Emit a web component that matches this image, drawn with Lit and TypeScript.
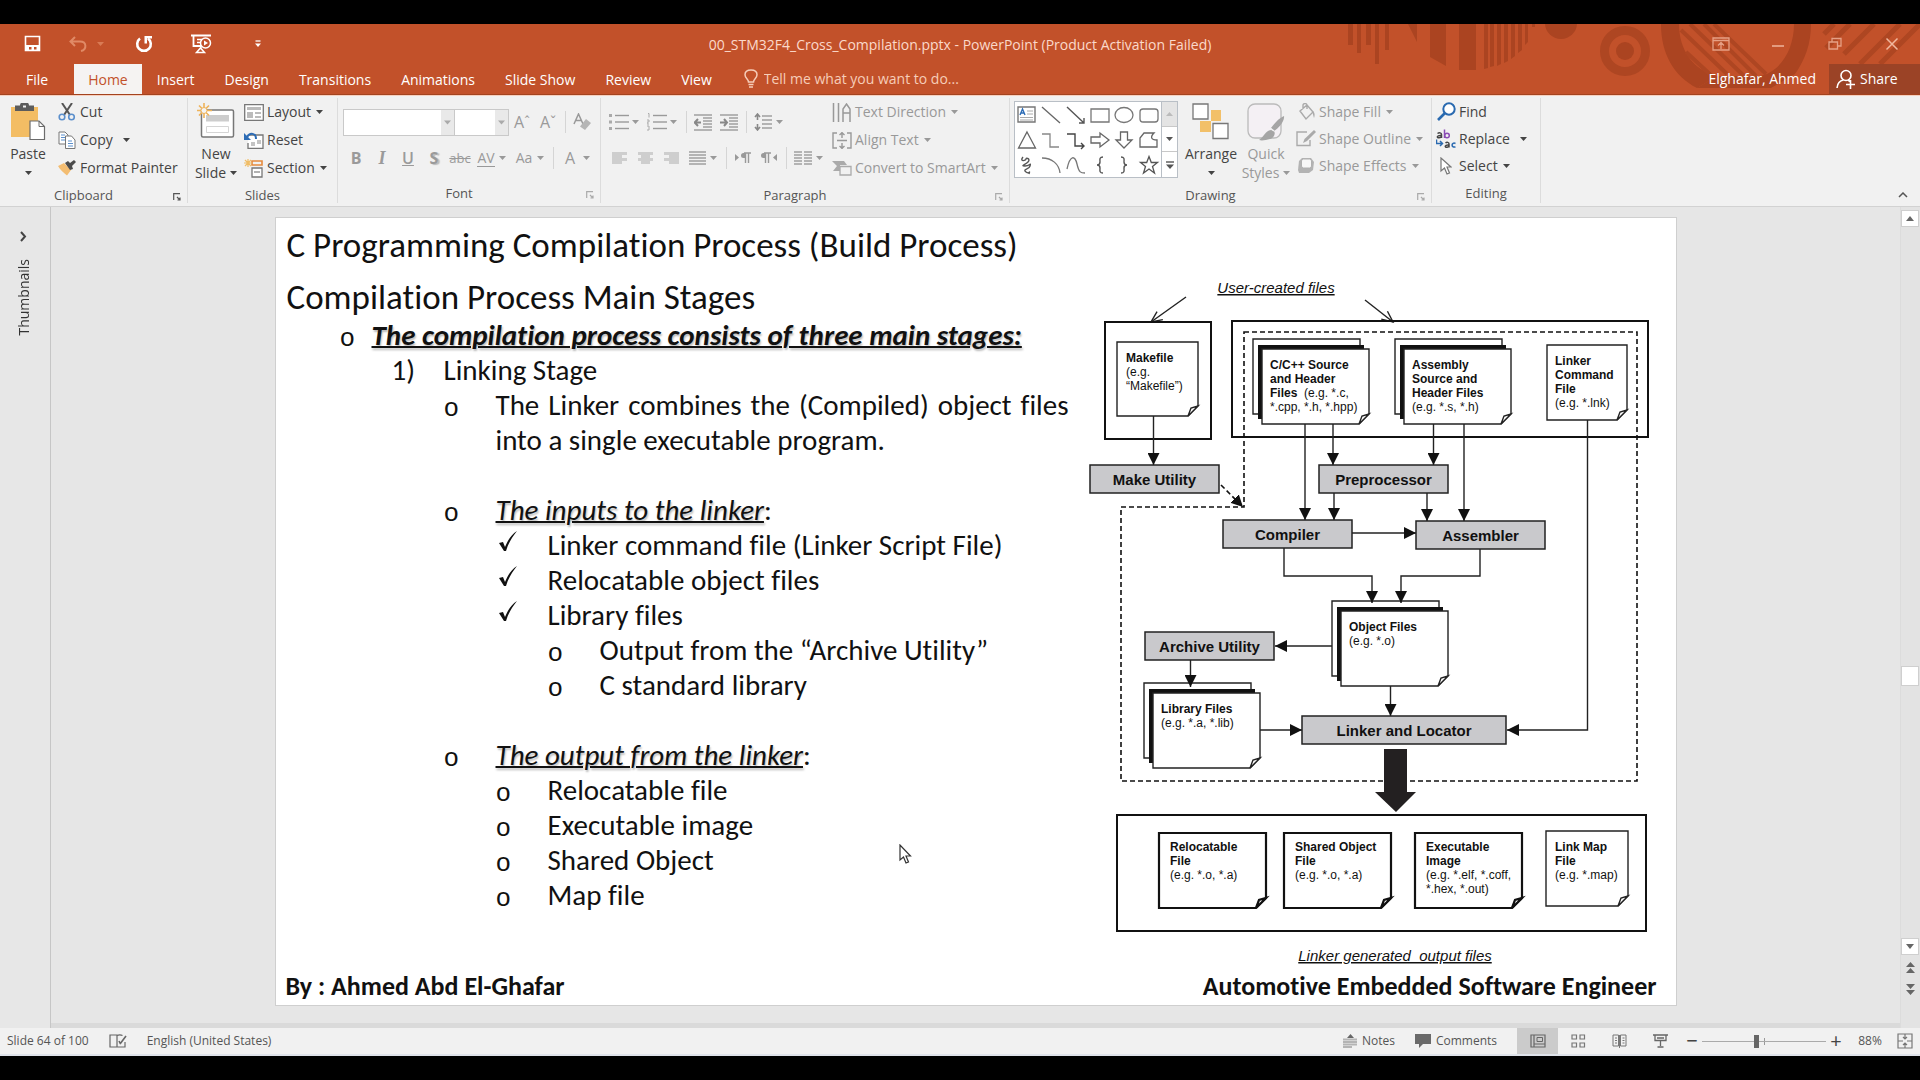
import { LitElement, html, svg, css, nothing } from "lit";
import { customElement } from "lit/decorators.js";

const icon = (w: number, h: number, body: unknown) =>
  html`<svg class="icon" width=${w} height=${h} viewBox="0 0 ${w} ${h}" fill="none" aria-hidden="true">${body}</svg>`;

const caret = html`<svg class="caret" width="7" height="4" viewBox="0 0 7 4" aria-hidden="true"><path d="M0 0H7L3.5 4Z" fill="currentColor" /></svg>`;

const lines = (x: number, w: number[], y: number, step: number) =>
  w.map((len, i) => svg`<path d="M${x} ${y + i * step}h${len}" stroke="currentColor" stroke-width="1.4" />`);

const icons = {
  save: icon(18, 18, svg`<path d="M1.500 1.500h14v14h-14z" stroke="#fff" stroke-width="1.600"/><path d="M1 10h15v6H1z" fill="#fff"/><path d="M5 12h2.500v2.500H5zM10 12h2.500v2.500H10z" fill="#c2512a"/>`),
  undo: icon(18, 16, svg`<path d="M6 1L1.500 5.500L6 10M2 5.500h9c7 0 7 8 1 9.500" stroke="#e08a66" stroke-width="2"/>`),
  redo: icon(18, 18, svg`<path d="M5 3.500a6.800 6.800 0 1 0 8 0" stroke="#fff" stroke-width="2.600"/><path d="M9.500 1h7.500v2.500h-5v5H9.500z" fill="#fff"/>`),
  show: icon(22, 20, svg`<path d="M1 1.500h20M3.500 2v10H11" stroke="#fff" stroke-width="1.800"/><path d="M7 5.500h5M7 8.500h3M11 12v3M6.500 18.500h8L10.500 14z" stroke="#fff" stroke-width="1.500"/><circle cx="15.500" cy="9" r="5" stroke="#fff" stroke-width="1.500"/><path d="M14 6.500v5l4-2.500z" fill="#fff"/>`),
  qat: icon(6, 8, svg`<path d="M0.500 1h5" stroke="#fff" stroke-width="1.300"/><path d="M0 3.500h6L3 7z" fill="#fff"/>`),
  ribbonOpts: icon(18, 14, svg`<path d="M1 1h16v12H1zM1 3.500h16M9 12V6M6 8.500L9 5.500l3 3" stroke="#e6a085" stroke-width="1.300"/>`),
  min: icon(14, 12, svg`<path d="M1 8h12" stroke="#eeb49c" stroke-width="1.500"/>`),
  restore: icon(14, 14, svg`<path d="M1 5h8.500v7H1zM4 5V1.500h9V9H10" stroke="#e6a085" stroke-width="1.300"/>`),
  close: icon(14, 14, svg`<path d="M1.500 1.500l11 11M12.500 1.500l-11 11" stroke="#f0b89f" stroke-width="1.500"/>`),
  bulb: icon(14, 20, svg`<path d="M4.500 13c0-3-3.500-3.500-3.500-7.200C1 2.800 3.500 1 7 1s6 1.800 6 4.800c0 3.700-3.500 4.200-3.500 7.200z" stroke="#f6cdb9" stroke-width="1.500"/><path d="M4.500 15.500h5M5 18h4" stroke="#f6cdb9" stroke-width="1.500"/>`),
  person: icon(20, 20, svg`<circle cx="10" cy="6.500" r="5" stroke="#fff" stroke-width="1.600"/><path d="M1 19c.5-5 3-7.500 6.500-8M12 11l2 1.500M10 15.500h9M14.500 11v9" stroke="#fff" stroke-width="1.600"/>`),
  paste: icon(36, 38, svg`<path d="M1 4h27v30H1z" fill="#f3bd64"/><path d="M5 2.500h5a4.500 3.500 0 0 1 9 0H24V8H5z" fill="#5c5c5c"/><path d="M13 2.500h3v2h-3z" fill="#f1f1f1"/><path d="M20 18h9l5.500 5.500V36.500H20z" fill="#fff" stroke="#6c6c6c" stroke-width="1.200"/><path d="M29 18v5.500h5.500" stroke="#6c6c6c"/>`),
  cut: icon(18, 18, svg`<path d="M4 0L12 12M14 0L6 12" stroke="#555" stroke-width="2"/><circle cx="4" cy="14" r="2.800" stroke="#5b8fcc" stroke-width="1.600"/><circle cx="13.500" cy="14" r="2.800" stroke="#5b8fcc" stroke-width="1.600"/>`),
  copy: icon(18, 18, svg`<path d="M1 1h6l3 3v9H1z" fill="#fff" stroke="#777"/><path d="M3 4h4M3 6.500h4M3 9h4" stroke="#5b8fcc"/><path d="M7.500 5h6l3.500 4v8.500H7.500z" fill="#fff" stroke="#777"/><path d="M10 10h4M10 12.500h5M10 15h5" stroke="#5b8fcc"/>`),
  painter: icon(18, 16, svg`<path d="M0 6l6-3 7 7-4 5.500C6 13 2 10 0 6z" fill="#f3bd72"/><path d="M7 3l3-2 2 2 4-3 2 2-4 4 1 3-3 1z" fill="#4c4c4c"/>`),
  newSlide: icon(38, 38, svg`<path d="M5 7h30a1.500 1.500 0 0 1 1.500 1.500v24A1.500 1.500 0 0 1 35 34H6a1.500 1.500 0 0 1-1.500-1.500V7z" fill="#fff" stroke="#777" stroke-width="1.500"/><path d="M9 12h23v6.500H9z" fill="#cdcdcd"/><path d="M9.500 23.500h22v6h-22z" stroke="#d5d5d5"/><path d="M7 0v15M0 7.500h15M2 2.500l10 10M12 2.500l-10 10" stroke="#eeb35a" stroke-width="1.600"/><circle cx="7" cy="7.500" r="3" fill="#f4f4f4" stroke="#eeb35a"/>`),
  layout: icon(20, 17, svg`<path d="M.7.7h18.600v15.600H.7z" fill="#fff" stroke="#777" stroke-width="1.300"/><path d="M3 3h14v3H3zM3 8h6v6H3zM11 8h6v2h-6zM11 12h6v2h-6z" fill="#bbb"/>`),
  reset: icon(20, 17, svg`<path d="M5 3h14v13.300H4V11" fill="#fff" stroke="#777" stroke-width="1.300"/><path d="M13 8h4v4h-4zM7 10h4v4H7z" fill="#c4c4c4"/><path d="M3 5c3-5 9-4 9 2" stroke="#2d6cb5" stroke-width="2"/><path d="M0 1v7h7z" fill="#2d6cb5"/>`),
  section: icon(20, 19, svg`<path d="M8 2h10v4H8z" stroke="#e58a3c" stroke-width="1.600"/><path d="M8 9h10v9H8z" fill="#fff" stroke="#777" stroke-width="1.300"/><path d="M10 13h6" stroke="#999" stroke-width="1.500"/><path d="M4 0v8M0 4h8M1 1l6 6M7 1L1 7" stroke="#f0bd66" stroke-width="1.200"/>`),
  clear: icon(18, 18, svg`<path d="M1 11L5.500 1L10 11M2.500 7.500h6" stroke="#999" stroke-width="1.500"/><path d="M13 6l5 4-6 7-5-3.500z" fill="#b5b5b5"/>`),
  bullets: icon(20, 18, [svg`<path d="M0 1h3v3H0zM0 7.500h3v3H0zM0 14h3v3H0z" fill="#aaa"/>`, lines(6, [14, 14, 14], 2.5, 6.5)]),
  numbers: icon(20, 18, [svg`<path d="M1 0.500h1v4M0 7h2v2H0v2h2M0 13h2v4H0" stroke="#aaa"/>`, lines(6, [14, 14, 14], 2.5, 6.5)]),
  outdent: icon(18, 17, [lines(0, [18], 1, 1), lines(9, [9, 9, 9, 9], 4, 3), lines(0, [18], 16, 1), svg`<path d="M0 8.500h7M4 5L.7 8.500L4 12" stroke="#888" stroke-width="2"/>`]),
  indent: icon(18, 17, [lines(0, [18], 1, 1), lines(9, [9, 9, 9, 9], 4, 3), lines(0, [18], 16, 1), svg`<path d="M0 8.500h7M4 5L7 8.500L4 12" stroke="#888" stroke-width="2"/>`]),
  spacing: icon(18, 18, [lines(8, [10, 10, 10, 10], 3, 4), svg`<path d="M3.500 1v6M3.500 11v6M1 4L3.500 1L6 4M1 14l2.500 3L6 14" stroke="#888" stroke-width="1.600"/>`]),
  left: icon(15, 12, svg`<path d="M0 0h15v3H0zM0 3h10v3H0zM0 6h15v3H0zM0 9h10v3H0z" fill="#cecece"/>`),
  center: icon(15, 12, svg`<path d="M0 0h15v3H0zM3 3h9v3H3zM0 6h15v3H0zM3 9h9v3H3z" fill="#cecece"/>`),
  right: icon(15, 12, svg`<path d="M0 0h15v3H0zM5 3h10v3H5zM0 6h15v3H0zM5 9h10v3H5z" fill="#cecece"/>`),
  justify: icon(17, 14, lines(0, [17, 17, 17, 17, 17], 1, 3)),
  ltr: icon(17, 12, svg`<path d="M0 2v7l4-3.500z" fill="#999"/><path d="M10 1h-1.500a2.500 2.500 0 0 0 0 5H10z" fill="#999"/><path d="M9 1h7M10.500 1v10M13.500 1v10" stroke="#999" stroke-width="1.400"/>`),
  rtl: icon(17, 12, svg`<path d="M16 2v7l-4-3.500z" fill="#999"/><path d="M4 1H2.500a2.500 2.500 0 0 0 0 5H4z" fill="#999"/><path d="M3 1h7M4.500 1v10M7.500 1v10" stroke="#999" stroke-width="1.400"/>`),
  columns: icon(18, 14, [lines(0, [8, 8, 8, 8, 8], 1, 3), lines(10, [8, 8, 8, 8, 8], 1, 3)]),
  textDir: icon(20, 19, svg`<path d="M1.500 0v19M6.500 0v19M11 19V6l3.500-5L18 6v13M11 10h7" stroke="#999" stroke-width="1.500"/>`),
  alignText: icon(20, 17, svg`<path d="M5 1H1v15h4M15 1h4v15h-4M5 8.500h10M10 0v6M10 11v6M7.500 3L10 .7 12.500 3M7.500 14l2.500 2.300 2.500-2.300" stroke="#999" stroke-width="1.400"/>`),
  smartArt: icon(20, 16, svg`<path d="M0 1h12l3 4H8v6H1l4-5z" fill="#aaa"/><path d="M8 6.500h11V15H8z" fill="#f1f1f1" stroke="#aaa" stroke-width="1.300"/>`),
  arrange: icon(38, 38, svg`<path d="M19 7h10v11H19zM8 18h11v11H8z" fill="#f2c069"/><path d="M1 1h15v15H1zM21 20.500h15v15H21z" fill="#fff" stroke="#777" stroke-width="1.300"/>`),
  quick: icon(38, 38, svg`<rect x="1" y="1" width="33" height="34" rx="7" fill="#f4f0f4" stroke="#bbb" stroke-width="1.300"/><path d="M37 13c1 5-6 13-10 15l-3-3c3-4 8-10 13-12zM24 27c6 0 4 8-1 9-4 1-8 2-11 1 5-3 6-9 12-10z" fill="#a5a5a5"/><path d="M23 25l4 3" stroke="#f1f1f1" stroke-width="1.500"/>`),
  fill: icon(18, 18, svg`<path d="M3 8l7-6 6 7-7 7zM6 6V2.500a2 2 0 0 1 4 0V6" stroke="#aaa" stroke-width="1.400"/><path d="M15 8c3 1 3 4 2 7z" fill="#aaa"/>`),
  outline: icon(20, 17, svg`<path d="M11 2H1v13.500h13V10" stroke="#aaa" stroke-width="1.400"/><path d="M18 0l2 2-9 9-4 2 1.500-4z" fill="#aaa"/>`),
  effects: icon(18, 17, svg`<path d="M5 1h9l3 4-1 8-4 3H2l-1-3 1-9z" fill="#b3b3b3"/><rect x="4.500" y="2" width="10" height="9" rx="2" fill="#f7f7f7" stroke="#b0b0b0"/>`),
  find: icon(19, 19, svg`<circle cx="12" cy="7" r="5.700" fill="#fff" stroke="#2a6ab0" stroke-width="2"/><path d="M8 11l-7 7" stroke="#2a6ab0" stroke-width="2.600"/>`),
  replace: icon(20, 20, svg`
    <g stroke-width="1.500">
      <path d="M1.500 4.500c1.500-1 4-1 4 1V9M5.500 6.500c-5-.5-5 2.500-2.500 2.300 1.500 0 2.500-1 2.500-2" stroke="#444"/>
      <path d="M8.500 0.500V9" stroke="#8a4cb4"/><circle cx="11" cy="6.500" r="2.300" stroke="#8a4cb4"/>
      <path d="M9.500 14c1.200-1 3.500-1 3.500 1v3.500M13 16c-4.500-.5-4.500 2.500-2.200 2.300 1.200 0 2.200-1 2.200-2" stroke="#444"/>
      <path d="M19.500 14.500c-4-2-5 4.500 0 3.500M0.500 10.500v4H6M4 12l2.500 2.500L4 17" stroke="#2a6ab0"/>
    </g>`),
  select: icon(12, 18, svg`<path d="M1 1v13l3.500-3 2.500 6 2.500-1-2.500-6h4z" fill="#fff" stroke="#777" stroke-width="1.200"/>`),
  launcher: icon(8, 8, svg`<path d="M.7 7V.7H7M4 4l3 3M7 4.500V7H4.500" stroke="currentColor" stroke-width="1.200"/>`),
  proof: icon(18, 15, svg`<path d="M1 1h7v12H1zM8 1.500c2-1 4-.8 5.500 0M8 13h8V8" stroke="#666" stroke-width="1.200"/><path d="M17 2l-6 8M10 7l1.500 3" stroke="#666" stroke-width="1.600"/>`),
  notes: icon(14, 14, svg`<path d="M4 4l3.500-4L11 4z" fill="#666"/><path d="M0 5.500h14M0 8h14M0 10.500h14M0 13h9" stroke="#b4b4b4" stroke-width="1.800"/>`),
  comments: icon(16, 14, svg`<path d="M0 0h16v10H8l-4 4v-4H0z" fill="#6a6a6a"/>`),
  normal: icon(16, 14, svg`<path d="M1 1h14v12H1zM4 1v12M4 10h11" stroke="#666" stroke-width="1.200"/><path d="M7 3.500h5.500v4H7z" stroke="#666"/>`),
  sorter: icon(15, 14, svg`<path d="M1 1h4.500v4H1zM9 1h4.500v4H9zM1 9h4.500v4H1zM9 9h4.500v4H9z" stroke="#777" stroke-width="1.200"/>`),
  reading: icon(15, 14, svg`<path d="M1 1h5.500v11H1zM8.500 1H14v11H8.500zM7.500 1v13M3 4h2M3 6.500h2M3 9h2M10.500 4h2M10.500 6.500h2M10.500 9h2" stroke="#777"/>`),
  present: icon(15, 14, svg`<path d="M0 1h15M2 1.500v5h11v-5M7.500 7v5M4.500 13h6M4 4h7" stroke="#666" stroke-width="1.300"/>`),
  fit: icon(16, 16, svg`<path d="M1 1h14v14H1zM8 1v5M8 10v5M1 8h5M10 8h5M6 4l2 2 2-2M6 12l2-2 2 2" stroke="#777" stroke-width="1.200"/>`),
  collapse: icon(10, 6, svg`<path d="M1 5l4-4 4 4" stroke="#555" stroke-width="1.500"/>`),
  expand: icon(7, 11, svg`<path d="M1 1l4 4.500L1 10" stroke="#444" stroke-width="2"/>`),
};

const shapes = [
  ["Text box", svg`<path d="M3 4h17v15H3z" stroke="#777" stroke-width="1.400" fill="#fff"/><path d="M5 12l2.500-6L10 12M6 10h3" stroke="#2d6cb5" stroke-width="1.400"/><path d="M12 8h6M12 11h6M5 14.500h13M5 17h13" stroke="#aaa"/>`],
  ["Line", svg`<path d="M3 4l18 16" stroke="#666" stroke-width="1.300"/>`],
  ["Line arrow", svg`<path d="M3 4l17 16M20 15v5h-5" stroke="#555" stroke-width="1.400"/>`],
  ["Rectangle", svg`<path d="M3 6h18v13H3z" stroke="#777" stroke-width="1.300"/>`],
  ["Oval", svg`<ellipse cx="12" cy="12" rx="9" ry="7.500" stroke="#777" stroke-width="1.300"/>`],
  ["Rounded rectangle", svg`<rect x="3" y="6" width="18" height="13" rx="3" stroke="#777" stroke-width="1.300"/>`],
  ["Triangle", svg`<path d="M12 4l8.500 16h-17z" stroke="#666" stroke-width="1.300"/>`],
  ["Elbow connector", svg`<path d="M3 6h8v13h9" stroke="#888" stroke-width="1.300"/>`],
  ["Elbow arrow", svg`<path d="M3 6h8v12h9M17 15l3 3-3 3" stroke="#444" stroke-width="1.400"/>`],
  ["Right arrow", svg`<path d="M3 9h9V5l9 7-9 7v-4H3z" stroke="#666" stroke-width="1.300"/>`],
  ["Down arrow", svg`<path d="M8.500 4h7v8h4.500l-8 8-8-8h4.500z" stroke="#666" stroke-width="1.300"/>`],
  ["Freeform", svg`<path d="M7 5h10c-4 4-3 7 3 7v7H3v-9z" stroke="#666" stroke-width="1.300"/>`],
  ["Scribble", svg`<path d="M8 4c-4 5 3 4 3 2s5 0 2 3-8 4-3 4 6-4 5 0-8 3-4 6 4-3 3 2" stroke="#555" stroke-width="1.400"/>`],
  ["Arc", svg`<path d="M3 5c10 0 17 6 18 15" stroke="#777" stroke-width="1.300"/>`],
  ["Curve", svg`<path d="M3 16C6 2 11 2 13 11s4 9 8 9" stroke="#777" stroke-width="1.300"/>`],
  ["Left brace", svg`<path d="M15 4c-4 0-3 3-3 5s-1 3-3 3c2 0 3 1 3 3s-1 5 3 5" stroke="#555" stroke-width="1.400"/>`],
  ["Right brace", svg`<path d="M9 4c4 0 3 3 3 5s1 3 3 3c-2 0-3 1-3 3s1 5-3 5" stroke="#555" stroke-width="1.400"/>`],
  ["Star", svg`<path d="M12 3.500l2.300 6h6.200l-5 4 2 6.500-5.500-4-5.500 4 2-6.500-5-4h6.200z" stroke="#555" stroke-width="1.300"/>`],
] as const;

const decoration = svg`
  <g fill="#ab4421">
    <path d="M28 0h5v21h-5zM37 0h4v29h-4zM46 0h5v21h-5zM55 0h4v40h-4zM65 0h4v26h-4zM88 0h9v18zM110 0h16v42l-16-9zM139 0h17v46h-17z"/>
    <path d="M164 0h4v44l-4 1zM170 0h4v42l-4 1zM177 0h4v40l-4 2zM184 0h4v37l-4 2zM191 0h4v32l-4 3zM198 0h4v26l-4 3zM205 0h3v18l-3 3zM212 0h3v3h-3z"/>
    <circle cx="241" cy="-1" r="16"/>
    <circle cx="305" cy="27" r="9"/>
    <path d="M341 0h18c0 26 14 46 38 52l-20 12C354 52 341 30 341 0zM474 0h17c0 20-6 36-16 50l-24 14h-52l48-14C464 42 474 22 474 0z"/>
    <path d="M377 64l20-12h50l4 12z"/>
  </g>
  <g fill="none" stroke="#ae4622">
    <circle cx="305" cy="27" r="20.500" stroke-width="9"/>
    <path d="M361 6l46 44M366 28l28 26M370 0l54 52M384 0l52 52M394 0l52 50" stroke-width="4"/>
    <path d="M504 10l10-10M506 24l24-24M524 30l30-30M540 40l40-40M560 40l40-40" stroke-width="5"/>
  </g>`;

type Note = { x: number; y: number; w: number; h: number; bold: string[]; plain: string[]; stack?: boolean; heavy?: boolean; pad?: number };

const notes: Note[] = [
  { x: 37, y: 82, w: 81, h: 74, bold: ["Makefile"], plain: ["(e.g.", "“Makefile”)"], pad: 9 },
  { x: 182, y: 89, w: 107, h: 75, bold: ["C/C++ Source", "and Header"], plain: ["*.cpp, *.h, *.hpp)"], stack: true },
  { x: 324, y: 89, w: 107, h: 75, bold: ["Assembly", "Source and", "Header Files"], plain: ["(e.g. *.s, *.h)"], stack: true },
  { x: 467, y: 85, w: 80, h: 75, bold: ["Linker", "Command", "File"], plain: ["(e.g. *.lnk)"] },
  { x: 261, y: 351, w: 107, h: 75, bold: ["Object Files"], plain: ["(e.g. *.o)"], stack: true },
  { x: 73, y: 433, w: 107, h: 75, bold: ["Library Files"], plain: ["(e.g. *.a, *.lib)"], stack: true },
  { x: 79, y: 573, w: 107, h: 75, bold: ["Relocatable", "File"], plain: ["(e.g. *.o, *.a)"], heavy: true, pad: 11 },
  { x: 204, y: 573, w: 107, h: 75, bold: ["Shared Object", "File"], plain: ["(e.g. *.o, *.a)"], heavy: true, pad: 11 },
  { x: 335, y: 573, w: 107, h: 75, bold: ["Executable", "Image"], plain: ["(e.g. *.elf, *.coff,", "*.hex, *.out)"], heavy: true, pad: 11 },
  { x: 466, y: 571, w: 82, h: 75, bold: ["Link Map", "File"], plain: ["(e.g. *.map)"], pad: 9 },
];

const drawNote = (n: Note) => {
  const { x, y, w, h } = n;
  const tx = x + (n.pad ?? 8);
  const isSource = n.bold[0] === "C/C++ Source";
  const first = y + 20 - (n.heavy ? 2 : 0);
  const plainStart = n.bold.length + (isSource ? 1 : 0);
  return svg`
    ${n.stack ? svg`<path class="thin" d="M${x - 9} ${y - 10}h107v75h-107z"/><path d="M${x - 4} ${y - 4}h106v74h-106z" fill="#111"/>` : nothing}
    <path class=${n.heavy ? "thick" : "thin"} d="M${x} ${y}h${w}v${h - 10}l-10 10h${10 - w}z"/>
    <path class=${n.heavy ? "thick" : "thin"} d="M${x + w - 10} ${y + h}l3-8 7-2z"/>
    ${n.bold.map((t, i) => svg`<text class="b" x=${tx} y=${first + i * 14}>${t}</text>`)}
    ${isSource ? svg`<text class="n" x=${tx} y=${first + 28}><tspan class="b">Files</tspan>  (e.g. *.c,</text>` : nothing}
    ${n.plain.map((t, i) => svg`<text class="n" x=${tx} y=${first + (plainStart + i) * 14}>${t}</text>`)}`;
};

const boxes: [number, number, number, string][] = [
  [10, 205, 129, "Make Utility"],
  [239, 205, 129, "Preprocessor"],
  [143, 260, 129, "Compiler"],
  [336, 261, 129, "Assembler"],
  [65, 372, 129, "Archive Utility"],
  [222, 456, 204, "Linker and Locator"],
];

const arrows = [
  "M73.500 156V205", "M225 164V260", "M253 164V205", "M353.500 164V205", "M384 164V261", "M254 233V260", "M347 233V261",
  "M272 273H336", "M507.500 160V470H427", "M204 287V316H292V343", "M400 288V316H321V343", "M252 386H195",
  "M110.500 400V427", "M180 470H222", "M310.500 426V456",
];

@customElement("build-diagram")
export class BuildDiagram extends LitElement {
  static styles = css`
    :host { display: block; }
    svg { display: block; width: 100%; height: auto; }
    text { font-family: "Liberation Sans", Arial, sans-serif; fill: #111; }
    .b { font-size: 12px; font-weight: 700; }
    .n { font-size: 12px; white-space: pre; }
    .box { font-size: 15px; font-weight: 700; text-anchor: middle; }
    .cap { font-size: 15px; font-style: italic; text-decoration: underline; text-anchor: middle; white-space: pre; }
    .thin { fill: #fff; stroke: #222; stroke-width: 1.4; }
    .thick { fill: #fff; stroke: #111; stroke-width: 2.2; }
    .frame { fill: none; stroke: #111; stroke-width: 2; }
    .wire { fill: none; stroke: #222; stroke-width: 1.4; }
    .dash { fill: none; stroke: #111; stroke-width: 1.6; stroke-dasharray: 5 3; }
    .util { fill: #c9c9cc; stroke: #222; stroke-width: 1.5; }
  `;

  render() {
    return html`<svg viewBox="0 0 596 712" role="img" aria-label="Build process diagram">
      <defs>
        <marker id="head" markerUnits="userSpaceOnUse" markerWidth="13" markerHeight="12" refX="12" refY="6" orient="auto">
          <path d="M0 0L12 6L0 12z" fill="#111" />
        </marker>
        <marker id="open" markerUnits="userSpaceOnUse" markerWidth="14" markerHeight="12" refX="12" refY="6" orient="auto">
          <path d="M1 1L12 6L1 11" fill="none" stroke="#222" stroke-width="1.4" />
        </marker>
      </defs>
      <text class="cap" x="196" y="33">User-created files</text>
      <path class="wire" d="M106 37L71 62" marker-end="url(#open)" />
      <path class="wire" d="M285 40L313 62" marker-end="url(#open)" />
      <path class="frame" d="M25 62h106v117H25zM152 61h416v116H152zM37 555h529v116H37z" />
      <path class="dash" d="M164 72H557V521H41V247H164Z" />
      ${notes.map(drawNote)}
      ${arrows.map((d) => svg`<path class="wire" d=${d} marker-end="url(#head)"/>`)}
      <path class="dash" d="M141 225L163 247" marker-end="url(#head)" />
      ${boxes.map(([x, y, w, t]) => svg`<path class="util" d="M${x} ${y}h${w}v28h${-w}z"/><text class="box" x=${x + w / 2} y=${y + 20}>${t}</text>`)}
      <path d="M304 489h23v43h9l-20 20-21-20h9z" fill="#232021" />
      <text class="cap" x="315" y="701">Linker generated  output files</text>
    </svg>`;
  }
}

const item = (mark: string, text: unknown, children: unknown = nothing) =>
  html`<li><span class="mark ${mark === "✓" ? "tick" : mark === "o" ? "ring" : ""}">${mark === "✓"
    ? html`<svg width="20" height="22" viewBox="0 0 20 22" role="img" aria-label="check"><path d="M1 12l4-1 2 5C10 9 13 4 19 0 14 6 10 13 8 20H6z" fill="#111" /></svg>`
    : mark}</span><div class="entry"><p>${text}</p>${children}</div></li>`;

const tool = (name: string, body: unknown, withCaret = false) =>
  html`<button class="tool ${withCaret ? "drop" : ""}" aria-label=${name}><span class="glyph">${body}</span>${withCaret ? caret : nothing}</button>`;

const command = (pic: unknown, text: string, withCaret = false) =>
  html`<button class="cmd"><span class="slot">${pic}</span>${text}${withCaret ? caret : nothing}</button>`;

const group = (cls: string, name: string, body: unknown, launch = true) =>
  html`<section class="group ${cls}"><div class="body">${body}</div>
    <div class="gfoot ${launch ? "wide" : ""}"><span>${name}</span>${launch ? html`<button class="launch" aria-label="${name} settings">${icons.launcher}</button>` : nothing}</div></section>`;

@customElement("app-root")
export class AppRoot extends LitElement {
  static styles = css`
    :host {
      display: flex; flex-direction: column; min-height: 100vh; box-sizing: border-box;
      padding: 24px 0; background: #000; color: #333;
      font: 14px/20px "Open Sans", "Noto Sans", sans-serif;
    }
    * { box-sizing: border-box; }
    button, input, select { font: inherit; color: inherit; border: 0; background: none; padding: 0; margin: 0; border-radius: 0; }
    svg { display: block; flex: none; }
    h1, h2, p, ul, ol { margin: 0; padding: 0; font-weight: 400; list-style: none; }

    .top { position: relative; background: #c2512a; color: #fff; border-bottom: 1px solid #a3431f; }
    .deco { position: absolute; top: 0; right: 0; }
    .title, .tabs { position: relative; display: flex; }
    .title { height: 40px; display: grid; grid-template-columns: 1fr auto 1fr; align-items: center; }
    .title h1 { font-size: 14px; color: #fbd9ca; padding-top: 1px; }
    .qat, .win { display: flex; align-items: center; }
    .qat { padding-left: 8px; }
    .win { justify-content: flex-end; }
    .qat button, .win button { width: 57px; height: 36px; display: flex; align-items: center; justify-content: center; gap: 10px; }
    .qat button:first-child { width: 50px; }
    .qat .caret { color: #d97b55; }
    .tabs { height: 30px; align-items: stretch; }
    .tab { padding: 2px 15px 0; display: flex; align-items: center; }
    .tab.file { padding: 2px 26px 0; }
    .tab.on { background: #f5f3f2; color: #c2512a; padding: 2px 14px 0; }
    .tell { display: flex; align-items: center; gap: 6px; margin-left: 17px; flex: 1; }
    .tell input { width: 260px; color: #f6cdb9; outline: 0; }
    .tell input::placeholder { color: #f6cdb9; opacity: 1; }
    .user { align-self: center; margin-right: 13px; }
    .share { background: #9b4326; width: 91px; display: flex; align-items: center; gap: 4px; padding-left: 7px; }

    .ribbon { background: #f1f1f1; display: flex; padding-top: 2px; height: 112px; border-top: 1px solid #f6d0bf; border-bottom: 1px solid #d2d2d2; color: #444; }
    .group { flex: none; height: 105px; border-right: 1px solid #dcdcdc; display: flex; flex-direction: column; gap: 3px; }
    .clip { width: 188px; } .slides { width: 150px; } .font { width: 263px; } .para { width: 409px; } .draw { width: 422px; } .edit { width: 109px; }
    .body { height: 84px; display: flex; }
    .gfoot { position: relative; text-align: center; font-size: 13px; color: #555; }
    .gfoot.wide { padding-right: 20px; }
    .launch { position: absolute; right: 6px; top: 8px; }
    .font .launch, .para .launch, .draw .launch { color: #aaa; }
    .big { padding-top: 5px; display: flex; flex-direction: column; align-items: center; line-height: 19px; width: 56px; }
    .big .icon { margin-bottom: 3px; }
    .big .row { display: flex; align-items: center; gap: 4px; height: 19px; }
    .cmds { display: flex; flex-direction: column; }
    .clip .cmds { padding-left: 1px; }
    .para .cmds, .draw .cmds, .edit .cmds { padding-left: 4px; }
    .cmd { height: 28px; display: flex; align-items: center; white-space: nowrap; }
    .draw .cmd, .edit .cmd { height: 27px; }
    .slot { width: 20px; margin-right: 3px; display: flex; justify-content: center; }
    .cmd .caret { margin-left: 5px; }
    .copyrow .caret { margin-left: 10px; }
    .off { color: #999; }
    .caret { flex: none; }
    .tools { padding: 6px 0 0 5px; }
    .trow { height: 36px; display: flex; align-items: center; color: #9a9a9a; }
    .tool { width: 26px; height: 28px; display: flex; align-items: center; color: #9a9a9a; }
    .tool.drop { width: 38px; }
    .glyph { width: 26px; display: flex; justify-content: center; font-size: 16px; }
    .sep { width: 8px; height: 22px; display: flex; justify-content: center; }
    .sep::before { content: ""; width: 1px; background: #d5d5d5; }
    .pick { position: relative; height: 27px; width: 112px; border: 1px solid #c9c9c9; background: #fff; display: flex; }
    .pick.size { width: 54px; border-left: 0; }
    .pick select { appearance: none; flex: 1; width: 100%; }
    .pick .caret { position: absolute; right: 0; top: 0; width: 13px; height: 25px; padding: 10px 3px; background: #e9e9e9; color: #aaa; }
    .bold { font-weight: 700; } .ital { font-style: italic; font-family: "Liberation Serif", serif; font-weight: 700; font-size: 18px; }
    .und { text-decoration: underline; font-weight: 600; } .shad { text-shadow: 2px 1px 1px #bbb; font-weight: 700; }
    .strike { text-decoration: line-through; font-size: 13px; }
    .track { font-size: 14px; border-bottom: 1px solid #999; line-height: 16px; }
    .small { font-size: 14px; }
    .gallery { margin: 3px 4px 0; width: 164px; height: 77px; border: 1px solid #b9bfc6; background: #fff; display: grid; grid-template-columns: 1fr 16px; }
    .cells { display: grid; grid-template-columns: repeat(6, 1fr); grid-template-rows: repeat(3, 1fr); }
    .cells button { display: flex; align-items: center; justify-content: center; }
    .gscroll { display: grid; grid-template-rows: repeat(3, 1fr); border-left: 1px solid #b9bfc6; }
    .gscroll button { display: flex; align-items: center; justify-content: center; border-bottom: 1px solid #c8c8c8; color: #555; }
    .gscroll button:first-child { background: #e4e4e4; color: #bbb; }
    .gscroll button:last-child { border-bottom: 0; }
    .draw .big { width: 58px; }
    .draw .big + .big { color: #999; width: 52px; }
    .fold { margin-left: auto; align-self: flex-end; padding: 0 12px 8px; }

    .work { flex: 1; display: flex; background: #e6e6e6; }
    .pane { width: 51px; border-right: 1px solid #c6c6c6; display: flex; flex-direction: column; align-items: center; padding: 21px 3px 0 0; gap: 15px; background: #e7e7e7; }
    .pane button { padding: 0 6px; height: 16px; }
    .pane span { writing-mode: vertical-rl; rotate: 180deg; font-size: 14px; }
    .stage { flex: 1; padding: 10px 24px 0; border-bottom: 5px solid #dadada; display: flex; justify-content: center; align-items: flex-start; }
    .slide { position: relative; width: 100%; max-width: 1402px; min-height: 789px; background: #fff; border: 1px solid #cfcfcf; color: #111;
      display: grid; grid-template-columns: minmax(0, 1fr) 596px; grid-template-rows: 1fr auto; font-family: Carlito, Lato, sans-serif; font-variant-ligatures: none; }
    .copy { padding: 6px 11px 0; }
    .copy h2 { font-size: 35px; line-height: 42px; margin-bottom: 10px; }
    .copy h2 + h2 { margin-bottom: 0; }
    .copy li { display: flex; }
    .copy p { font-size: 29px; line-height: 35px; min-height: 35px; text-align: justify; }
    .mark { width: 52px; flex: none; font-size: 29px; line-height: 35px; height: 35px; }
    .ring { font-family: "Liberation Mono", monospace; font-size: 26px; padding: 4px 0 0; }
    .tick { padding: 3px 0 0 2px; }
    .entry { flex: 1; }
    .outline { padding-left: 53px; }
    .outline > li > .mark { width: 32px; }
    .outline > li > .entry > ol { padding-left: 20px; }
    .gap { margin-bottom: 35px; }
    .lead { text-decoration: underline; font-style: italic; text-shadow: 1px 2px 2px #bbb; text-decoration-thickness: 2px; }
    .lead.heavy { font-weight: 700; white-space: nowrap; }
    build-diagram { padding-top: 42px; }
    .foot { grid-column: 1 / -1; display: flex; justify-content: space-between; padding: 0 19px 5px 10px; font-weight: 700; font-size: 26px; line-height: 28px; align-self: end; }
    .pointer { position: absolute; left: 44.5%; top: 79.6%; }

    .vbar { width: 20px; display: flex; flex-direction: column; align-items: center; padding: 3px 1px 0 0; background: #e3e3e3; color: #666; border-left: 1px solid #dcdcdc; }
    .vbar button { width: 18px; height: 17px; display: flex; align-items: center; justify-content: center; }
    .vbar .edge, .vbar .thumb { background: #fff; border: 1px solid #cfcfcf; }
    .vbar .thumb { height: 20px; }
    .vbar .above { flex: 441; } .vbar .below { flex: 253; }
    .vbar .tail { display: flex; flex-direction: column; gap: 5px; padding: 4px 0 30px; }

    .status { background: #f1f1f1; height: 28px; display: flex; align-items: center; font-size: 12px; color: #555; border-bottom: 2px solid #dfe3ea; }
    .status .info { display: flex; align-items: center; gap: 20px; padding-left: 7px; flex: 1; }
    .status button { display: flex; align-items: center; gap: 5px; }
    .status .txt { margin-right: 20px; }
    .status .view { width: 41px; height: 26px; justify-content: center; }
    .view.on { background: #cbcbcb; }
    .zoom { display: flex; align-items: center; gap: 4px; padding-left: 5px; }
    .zoom button { font-size: 20px; line-height: 20px; width: 12px; justify-content: center; color: #444; }
    .zoom input { appearance: none; width: 124px; height: 16px; background: linear-gradient(#aaa, #aaa) center / 100% 1px no-repeat, linear-gradient(#999, #999) center / 1px 7px no-repeat; }
    .zoom input::-webkit-slider-thumb { appearance: none; width: 5px; height: 13px; background: #666; }
    .zoom output { width: 44px; text-align: center; margin-left: 2px; }
    .fit { padding: 0 7px 0 5px; }
  `;

  private header() {
    const tabs = ["Insert", "Design", "Transitions", "Animations", "Slide Show", "Review", "View"];
    return html`<header class="top">
      <svg class="deco" width="600" height="70" viewBox="0 0 600 70" aria-hidden="true">${decoration}</svg>
      <div class="title">
        <div class="qat">
          <button aria-label="Save">${icons.save}</button>
          <button aria-label="Undo">${icons.undo}${caret}</button>
          <button aria-label="Repeat">${icons.redo}</button>
          <button aria-label="Start from beginning">${icons.show}</button>
          <button aria-label="Customize toolbar">${icons.qat}</button>
        </div>
        <h1>00_STM32F4_Cross_Compilation.pptx - PowerPoint (Product Activation Failed)</h1>
        <div class="win">
          <button aria-label="Ribbon display options">${icons.ribbonOpts}</button>
          <button aria-label="Minimize">${icons.min}</button>
          <button aria-label="Restore">${icons.restore}</button>
          <button aria-label="Close">${icons.close}</button>
        </div>
      </div>
      <nav class="tabs">
        <button class="tab file">File</button>
        <button class="tab on">Home</button>
        ${tabs.map((t) => html`<button class="tab">${t}</button>`)}
        <label class="tell">${icons.bulb}<input type="text" aria-label="Tell me what you want to do" placeholder="Tell me what you want to do..." /></label>
        <span class="user">Elghafar, Ahmed</span>
        <button class="share">${icons.person}Share</button>
      </nav>
    </header>`;
  }

  private ribbon() {
    const sep = html`<span class="sep"></span>`;
    return html`<div class="ribbon">
      ${group("clip", "Clipboard", html`
        <button class="big">${icons.paste}<span>Paste</span><span class="row">${caret}</span></button>
        <div class="cmds">${command(icons.cut, "Cut")}<div class="copyrow">${command(icons.copy, "Copy", true)}</div>${command(icons.painter, "Format Painter")}</div>`)}
      ${group("slides", "Slides", html`
        <button class="big">${icons.newSlide}<span>New</span><span class="row">Slide${caret}</span></button>
        <div class="cmds">${command(icons.layout, "Layout", true)}${command(icons.reset, "Reset")}${command(icons.section, "Section", true)}</div>`, false)}
      ${group("font", "Font", html`<div class="tools">
        <div class="trow">
          <span class="pick"><select aria-label="Font name"></select>${caret}</span><span class="pick size"><select aria-label="Font size"></select>${caret}</span>
          ${tool("Increase font size", html`A<sup class="small">ˆ</sup>`)}${tool("Decrease font size", html`A<sup class="small">ˇ</sup>`)}${sep}${tool("Clear formatting", icons.clear)}
        </div>
        <div class="trow">
          ${tool("Bold", html`<span class="bold">B</span>`)}${tool("Italic", html`<span class="ital">I</span>`)}${tool("Underline", html`<span class="und">U</span>`)}${tool("Shadow", html`<span class="shad">S</span>`)}${tool("Strikethrough", html`<span class="strike">abc</span>`)}
          ${tool("Character spacing", html`<span class="track">AV</span>`, true)}${tool("Change case", html`<span class="small">Aa</span>`, true)}${sep}${tool("Font color", "A", true)}
        </div></div>`)}
      ${group("para", "Paragraph", html`<div class="tools">
        <div class="trow">${tool("Bullets", icons.bullets, true)}${tool("Numbering", icons.numbers, true)}${sep}${tool("Decrease indent", icons.outdent)}${tool("Increase indent", icons.indent)}${sep}${tool("Line spacing", icons.spacing, true)}</div>
        <div class="trow">${tool("Align left", icons.left)}${tool("Center", icons.center)}${tool("Align right", icons.right)}${tool("Justify", icons.justify, true)}${sep}${tool("Left to right", icons.ltr)}${tool("Right to left", icons.rtl)}${sep}${tool("Columns", icons.columns, true)}</div></div>
        <div class="cmds off">${command(icons.textDir, "Text Direction", true)}${command(icons.alignText, "Align Text", true)}${command(icons.smartArt, "Convert to SmartArt", true)}</div>`)}
      ${group("draw", "Drawing", html`
        <div class="gallery"><div class="cells">${shapes.map(([n, g]) => html`<button aria-label=${n}>${icon(24, 24, g)}</button>`)}</div>
          <div class="gscroll"><button aria-label="Previous shapes">${icon(7, 4, svg`<path d="M0 4h7L3.500 0z" fill="currentColor"/>`)}</button><button aria-label="Next shapes">${caret}</button><button aria-label="More shapes">${icon(8, 8, svg`<path d="M0 1h8" stroke="currentColor" stroke-width="1.400"/><path d="M0 3.500h8L4 8z" fill="currentColor"/>`)}</button></div></div>
        <button class="big">${icons.arrange}<span>Arrange</span><span class="row">${caret}</span></button>
        <button class="big">${icons.quick}<span>Quick</span><span class="row">Styles${caret}</span></button>
        <div class="cmds off">${command(icons.fill, "Shape Fill", true)}${command(icons.outline, "Shape Outline", true)}${command(icons.effects, "Shape Effects", true)}</div>`)}
      ${group("edit", "Editing", html`<div class="cmds">${command(icons.find, "Find")}<div class="copyrow">${command(icons.replace, "Replace", true)}</div>${command(icons.select, "Select", true)}</div>`, false)}
      <button class="fold" aria-label="Collapse the ribbon">${icons.collapse}</button>
    </div>`;
  }

  private slide() {
    return html`<article class="slide">
      <div class="copy">
        <h2>C Programming Compilation Process (Build Process)</h2>
        <h2>Compilation Process Main Stages</h2>
        <ul class="outline">
          ${item("o", html`<span class="lead heavy">The compilation process consists of three main stages:</span>`, html`<ol>
            ${item("1)", "Linking Stage", html`<ul>
              ${item("o", "The Linker combines the (Compiled) object files into a single executable program.", html`<div class="gap"></div>`)}
              ${item("o", html`<span class="lead">The inputs to the linker</span>:`, html`<ul class="gap">
                ${item("✓", "Linker command file (Linker Script File)")}
                ${item("✓", "Relocatable object files")}
                ${item("✓", "Library files", html`<ul>${item("o", "Output from the “Archive Utility”")}${item("o", "C standard library")}</ul>`)}
              </ul>`)}
              ${item("o", html`<span class="lead">The output from the linker</span>:`, html`<ul>
                ${["Relocatable file", "Executable image", "Shared Object", "Map file"].map((t) => item("o", t))}
              </ul>`)}
            </ul>`)}
          </ol>`)}
        </ul>
      </div>
      <build-diagram></build-diagram>
      <footer class="foot"><span>By : Ahmed Abd El-Ghafar</span><span>Automotive Embedded Software Engineer</span></footer>
      <svg class="pointer" width="13" height="21" viewBox="0 0 13 21" aria-hidden="true"><path d="M1 1v15l3.500-3 2.500 6 2.500-1-2.500-6h4.500z" fill="#fff" stroke="#333" stroke-width="1.2" /></svg>
    </article>`;
  }

  render() {
    const up = icon(8, 5, svg`<path d="M0 5h8L4 0z" fill="currentColor"/>`);
    const down = icon(8, 5, svg`<path d="M0 0h8L4 5z" fill="currentColor"/>`);
    return html`
      ${this.header()}
      ${this.ribbon()}
      <main class="work">
        <aside class="pane"><button aria-label="Expand thumbnails">${icons.expand}</button><span>Thumbnails</span></aside>
        <div class="stage">${this.slide()}</div>
        <div class="vbar">
          <button class="edge" aria-label="Scroll up">${up}</button>
          <span class="above"></span><button class="thumb" aria-label="Scroll position"></button><span class="below"></span>
          <button class="edge" aria-label="Scroll down">${down}</button>
          <div class="tail">
            <button aria-label="Previous slide">${icon(9, 11, svg`<path d="M0 5h9L4.500 0zM0 11h9L4.500 6z" fill="currentColor"/>`)}</button>
            <button aria-label="Next slide">${icon(9, 11, svg`<path d="M0 0h9L4.500 5zM0 6h9L4.500 11z" fill="currentColor"/>`)}</button>
          </div>
        </div>
      </main>
      <footer class="status">
        <div class="info"><span>Slide 64 of 100</span><button aria-label="Proofing">${icons.proof}</button><span>English (United States)</span></div>
        <button class="txt">${icons.notes}Notes</button>
        <button class="txt">${icons.comments}Comments</button>
        <button class="view on" aria-label="Normal view">${icons.normal}</button>
        <button class="view" aria-label="Slide sorter">${icons.sorter}</button>
        <button class="view" aria-label="Reading view">${icons.reading}</button>
        <button class="view" aria-label="Slide show">${icons.present}</button>
        <div class="zoom"><button aria-label="Zoom out">−</button><input type="range" aria-label="Zoom" min="0" max="100" value="44" /><button aria-label="Zoom in">+</button><output>88%</output></div>
        <button class="fit" aria-label="Fit slide to window">${icons.fit}</button>
      </footer>`;
  }
}
